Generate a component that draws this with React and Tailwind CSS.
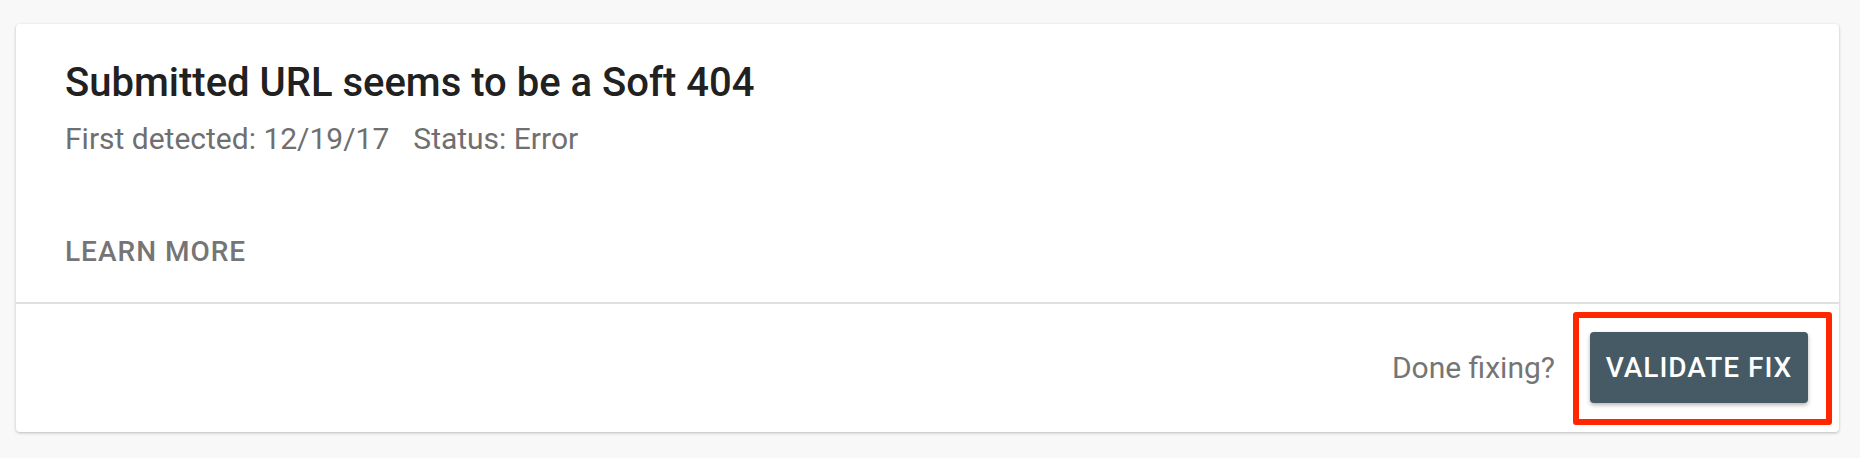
import React from "react";

const App = () => {
  return (
    <div className="min-h-[458px] w-[1860px] bg-[#f8f8f8] pt-[24px] pl-[16px] font-['Roboto',sans-serif]">
      <div className="w-[1823px] rounded-[4px] bg-white shadow-[0_1px_3px_rgba(0,0,0,0.25)]">
        <div className="px-[49px] pt-[35px] pb-[32px]">
          <h2 className="text-[40px] leading-[48px] font-medium text-[#212121]">
            Submitted URL seems to be a Soft 404
          </h2>
          <p className="mt-[14px] text-[30px] leading-[36px] text-[#6f6f6f]">
            <span>First detected: 12/19/17</span>
            <span className="ml-[24px]">Status: Error</span>
          </p>
          <div className="mt-[77px] text-[28px] leading-[36px] font-medium tracking-[1px] text-[#757575]">
            LEARN MORE
          </div>
        </div>
        <div className="h-[2px] bg-[#e0e0e0]" />
        <div className="flex items-center justify-end gap-[35px] pr-[31px] pt-[28px] pb-[29px]">
          <span className="text-[30px] leading-[36px] text-[#757575]">Done fixing?</span>
          <div className="relative">
            <button className="h-[71px] w-[218px] rounded-[4px] bg-[#455a64] text-[28px] font-medium tracking-[1px] text-white shadow-[0_2px_4px_rgba(0,0,0,0.3)]">
              VALIDATE FIX
            </button>
            <div className="pointer-events-none absolute -top-[20px] -left-[17px] -right-[24px] -bottom-[22px] rounded-[3px] border-[6px] border-[#ff2600]" />
          </div>
        </div>
      </div>
    </div>
  );
};

export default App;
